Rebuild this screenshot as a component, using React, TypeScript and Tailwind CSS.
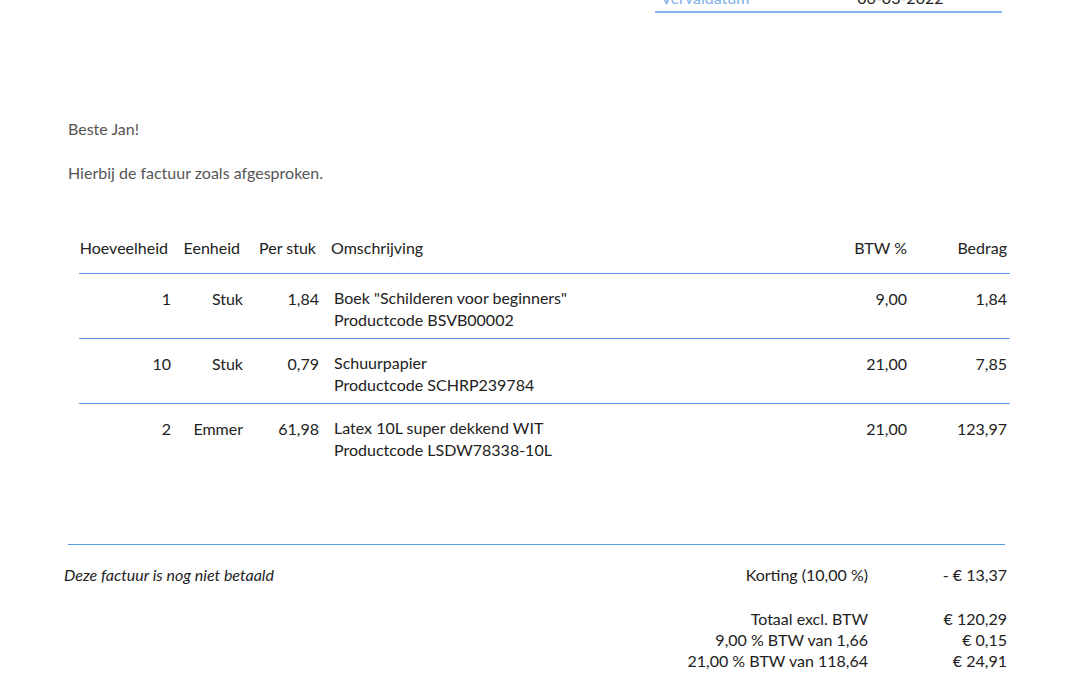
const rows = [
  { q: "1", u: "Stuk", p: "1,84", d: 'Boek "Schilderen voor beginners"', c: "Productcode BSVB00002", b: "9,00", t: "1,84" },
  { q: "10", u: "Stuk", p: "0,79", d: "Schuurpapier", c: "Productcode SCHRP239784", b: "21,00", t: "7,85" },
  { q: "2", u: "Emmer", p: "61,98", d: "Latex 10L super dekkend WIT", c: "Productcode LSDW78338-10L", b: "21,00", t: "123,97" },
]

const Cols = ({ a, b, c, d, e, f }: { a: React.ReactNode; b: React.ReactNode; c: React.ReactNode; d: React.ReactNode; e: React.ReactNode; f: React.ReactNode }) => (
  <div className="flex">
    <div className="w-[92px] text-right">{a}</div>
    <div className="w-[72px] text-right">{b}</div>
    <div className="w-[76px] text-right">{c}</div>
    <div className="flex-1 pl-[15px]">{d}</div>
    <div className="w-[80px] text-right">{e}</div>
    <div className="w-[100px] text-right pr-[3px]">{f}</div>
  </div>
)

export default function App() {
  return (
    <div className="w-[1080px] h-[675px] overflow-hidden bg-white text-[16px] text-[#222]" style={{ fontFamily: "Lato, 'Open Sans', sans-serif" }}>
      <div className="ml-[655px] w-[347px] mt-[-14px] border-b-2 border-[#8ab8ee] flex pb-[1px]">
        <span className="text-[#7fb1ea] ml-[6px]">Vervaldatum</span>
        <span className="ml-[108px]">06-03-2022</span>
      </div>
      <div className="ml-[68px] mt-[104px] text-[#555]">Beste Jan!</div>
      <div className="ml-[68px] mt-[20px] text-[#555]">Hierbij de factuur zoals afgesproken.</div>
      <div className="ml-[76px] w-[934px] mt-[51px]">
        <div className="pb-[13px]">
          <Cols a={<span className="-ml-[16px]">Hoeveelheid</span>} b="Eenheid" c="Per stuk" d="Omschrijving" e={<span className="pr-[3px]">BTW %</span>} f="Bedrag" />
        </div>
        {rows.map((r, i) => (
          <div key={i} className="ml-[3px] pt-[13px] pb-[7px] border-t border-[#5b9be6]">
            <Cols a={r.q} b={r.u} c={r.p} d={<div className="leading-[22px]">{r.d}<br />{r.c}</div>} e={<span className="pr-[3px]">{r.b}</span>} f={r.t} />
          </div>
        ))}
      </div>
      <div className="ml-[68px] w-[937px] mt-[76px] border-t border-[#5b9be6]" />
      <div className="flex mt-[18px] ml-[64px] w-[943px]">
        <div className="flex-1 italic">Deze factuur is nog niet betaald</div>
        <div className="w-[300px] text-right">Korting (10,00 %)</div>
        <div className="w-[139px] text-right">- € 13,37</div>
      </div>
      <div className="ml-[64px] w-[943px] mt-[21px] leading-[21px]">
        {[["Totaal excl. BTW", "€ 120,29"], ["9,00 % BTW van 1,66", "€ 0,15"], ["21,00 % BTW van 118,64", "€ 24,91"]].map(([l, v]) => (
          <div key={l} className="flex justify-end">
            <div className="text-right">{l}</div>
            <div className="w-[139px] text-right">{v}</div>
          </div>
        ))}
      </div>
    </div>
  )
}
